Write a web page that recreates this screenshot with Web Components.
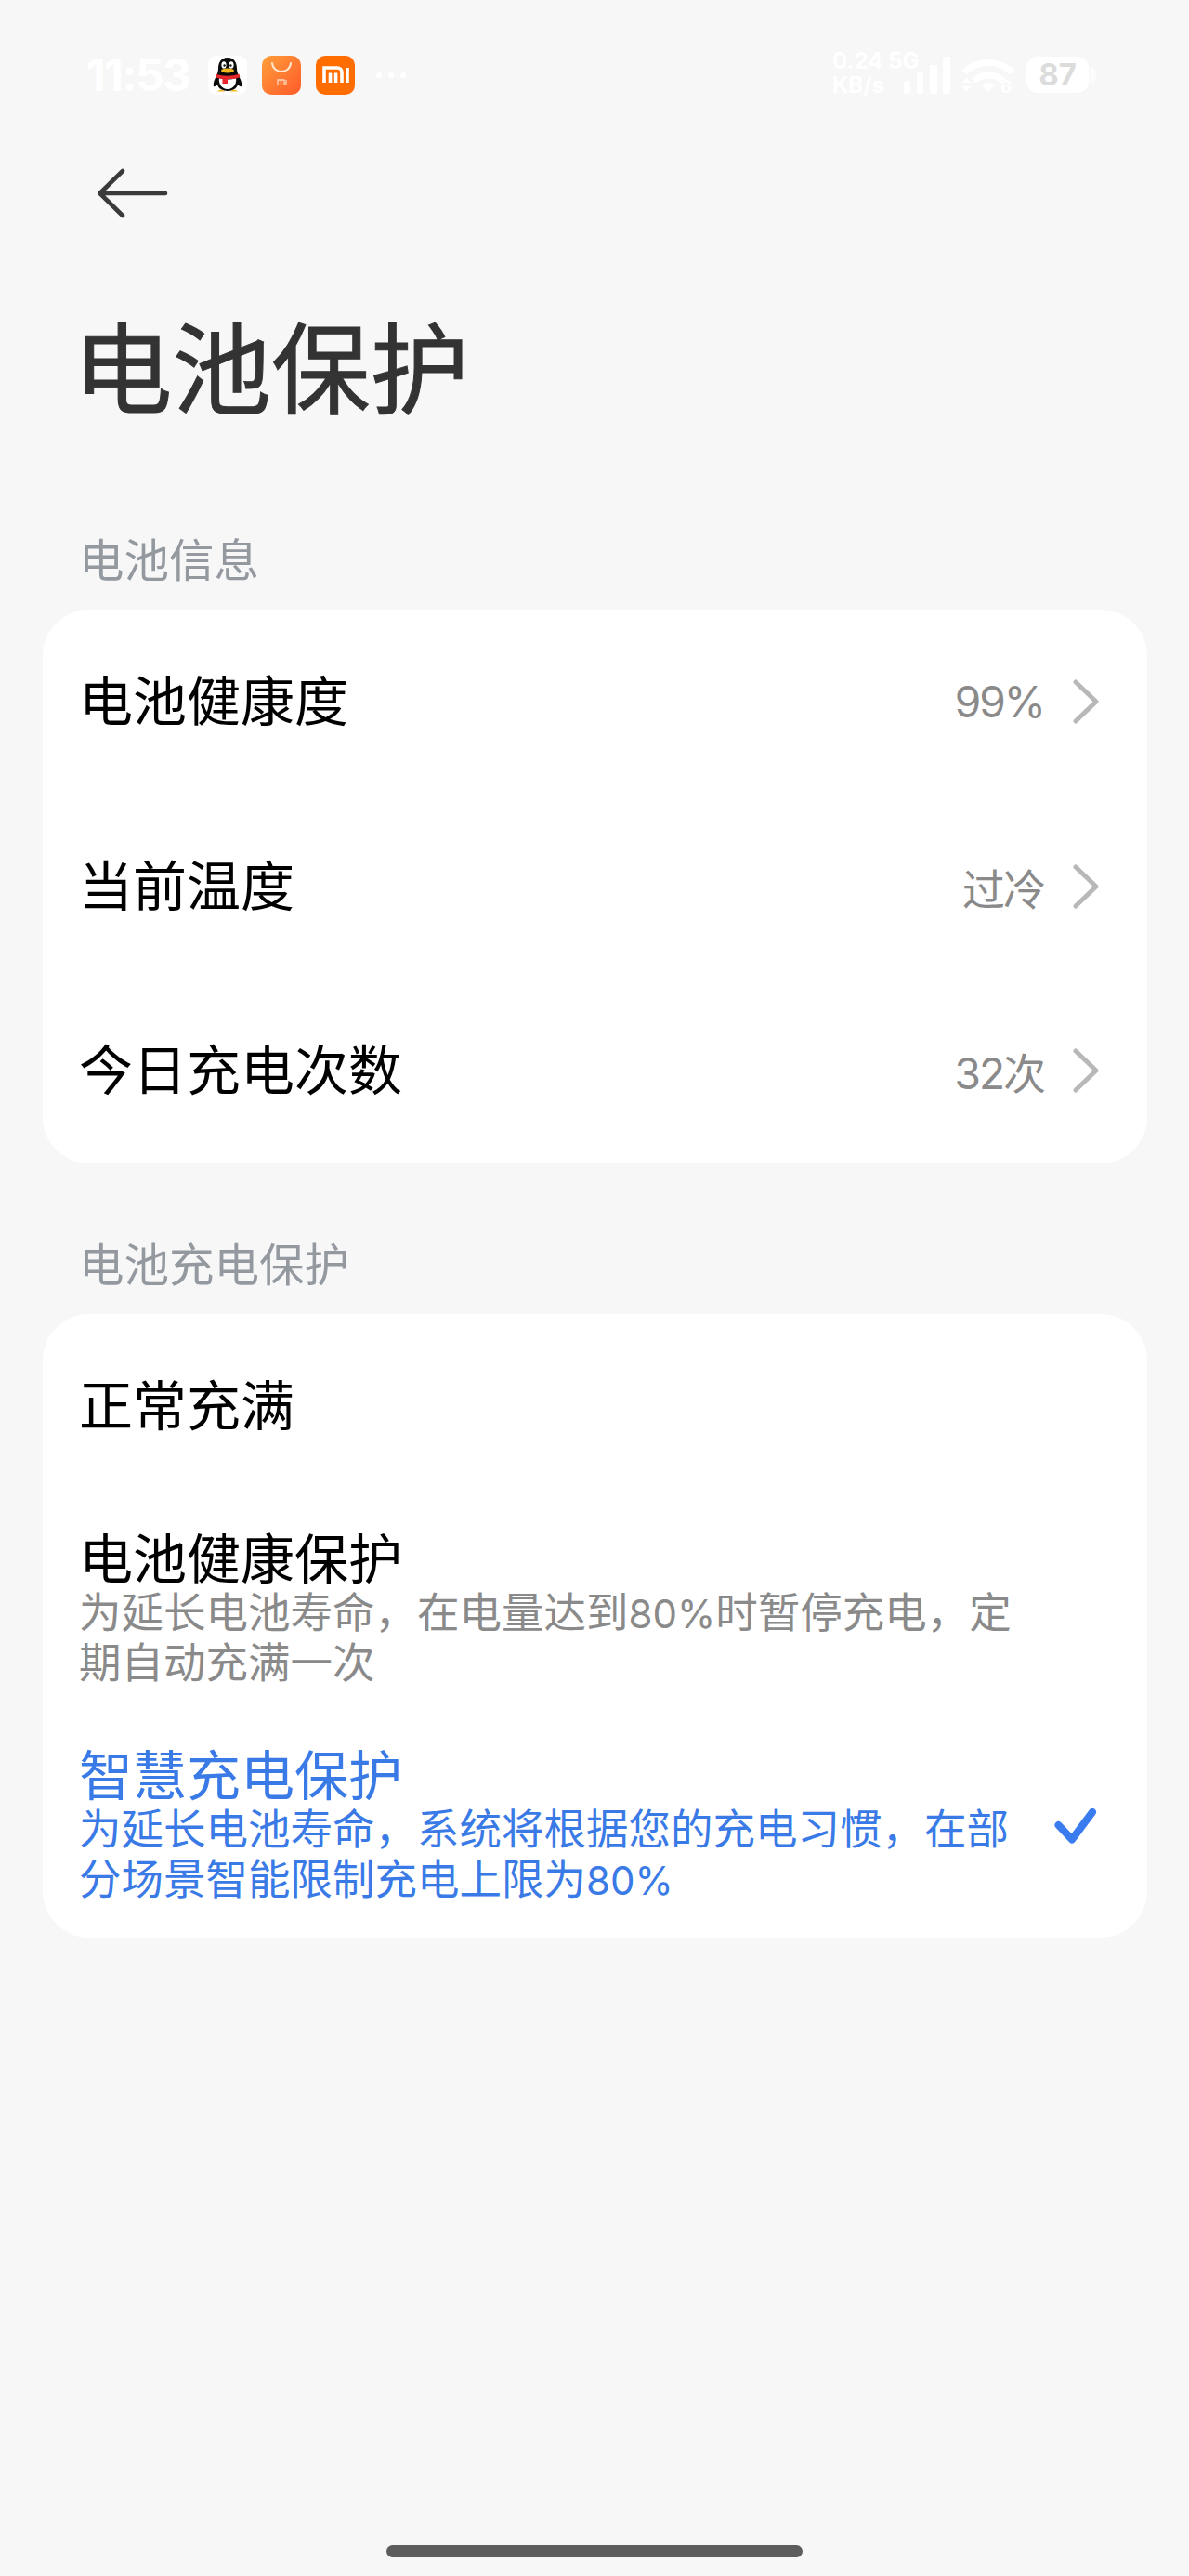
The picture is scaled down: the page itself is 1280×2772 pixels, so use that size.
<!DOCTYPE html>
<html lang="zh-CN">
<head>
<meta charset="utf-8">
<title>电池保护</title>
<style>
html, body { margin: 0; background: #f7f7f7; }
body { font-family: Inter, "Noto Sans CJK SC", sans-serif; }
.n { font-size: 42px; line-height: 1; }
</style>
</head>
<body>
<battery-page>
  <status-bar></status-bar>
  <page-header>电池保护</page-header>
  <section-label>电池信息</section-label>
  <settings-card>
    <info-row value="99%">电池健康度</info-row>
    <info-row value="过冷">当前温度</info-row>
    <info-row value="32次">今日充电次数</info-row>
  </settings-card>
  <section-label>电池充电保护</section-label>
  <settings-card>
    <choice-row class="plain">正常充满</choice-row>
    <choice-row class="tight">电池健康保护<span slot="sub">为延长电池寿命&#xFF0C;在电量达到<span class="n">80%</span>时暂停充电&#xFF0C;定<br>期自动充满一次</span></choice-row>
    <choice-row checked>智慧充电保护<span slot="sub">为延长电池寿命&#xFF0C;系统将根据您的充电习惯&#xFF0C;在部<br>分场景智能限制充电上限为<span class="n">80%</span></span></choice-row>
  </settings-card>
  <home-bar></home-bar>
</battery-page>

<script>
class BatteryPage extends HTMLElement {
  constructor() {
    super();
    this.attachShadow({mode: "open"}).innerHTML = `
    <style>
    :host { display: flex; flex-direction: column; height: 2772px; box-sizing: border-box; overflow: hidden; }
    </style>
    <slot></slot>`;
  }
}

class StatusBar extends HTMLElement {
  constructor() {
    super();
    this.attachShadow({mode: "open"}).innerHTML = `
    <style>
    :host { display: flex; align-items: center; height: 41px; margin-top: 60px; padding: 0 108px 0 93px; color: #fff; font-family: Inter, sans-serif; font-weight: 700; }
    .time { font-size: 48px; line-height: 41px; width: 131px; letter-spacing: -1.5px; }
    .apps { display: flex; gap: 16px; align-items: center; }
    svg { display: block; overflow: visible; }
    .dots { display: flex; gap: 7px; margin-left: 23px; }
    .dots i { width: 6px; height: 6px; border-radius: 50%; background: #fff; }
    .right { margin-left: auto; display: flex; align-items: center; }
    .net { display: grid; font-size: 24px; line-height: 26px; width: 77px; white-space: nowrap; margin-top: -3px; }
    .bat { position: relative; width: 67px; height: 39px; border-radius: 12px; background: #fff; margin-left: 13px; color: #dcdcdc; font-size: 33px; line-height: 39px; text-align: center; }
    .bat::after { content: ""; position: absolute; left: 68px; top: 12px; width: 7px; height: 16px; border-radius: 0 6px 6px 0; background: #fcfcfc; }
    </style>
    <div class="time">11:53</div>
    <div class="apps">
      <svg width="42" height="42" viewBox="0 0 42 42">
        <rect width="42" height="42" rx="9" fill="#fff"/>
        <path d="M21 2c-7 0-10 5-10 12 0 3-1 5-2 8-2 3-4 8-3 11 1 1 3-1 4-2 1 4 5 7 11 7s10-3 11-7c1 1 3 3 4 2 1-3-1-8-3-11-1-3-2-5-2-8 0-7-3-12-10-12z" fill="#0b0b0b"/>
        <path d="M12 24c-1 5 2 12 9 12s10-7 9-12c-5 2-13 2-18 0z" fill="#fff"/>
        <ellipse cx="17" cy="10" rx="2.6" ry="3.8" fill="#fff"/><ellipse cx="25" cy="10" rx="2.6" ry="3.8" fill="#fff"/>
        <circle cx="17.6" cy="10.5" r="1.2" fill="#111"/><circle cx="24.4" cy="10.5" r="1.2" fill="#111"/>
        <ellipse cx="21" cy="16" rx="7" ry="2.4" fill="#f5b81c"/>
        <path d="M8.500 19.500c7 3 18 3 25 0l.8 3.500c-2 1-4 1.600-7 2H21v5h-5.500v-5c-3-.4-5.500-1-7.500-2z" fill="#e8252a"/>
        <path d="M10 38.500c2-2.500 6-2 8 0zM24 38.500c2-2 6-2.500 8 0z" fill="#f5b81c"/>
      </svg>
      <svg width="42" height="42" viewBox="0 0 42 42">
        <defs><linearGradient id="g" x1="0" y1="0" x2="1" y2="1"><stop offset="0" stop-color="#ff9f3a"/><stop offset="1" stop-color="#ff5a2a"/></linearGradient></defs>
        <rect width="42" height="42" rx="10" fill="url(#g)"/>
        <path d="M11 8c1 12 19 12 20 0" fill="none" stroke="#ffe9d2" stroke-width="2" stroke-linecap="round"/>
        <path d="M17 31v-5h7v5M20.500 26.500V31M26 26v5" fill="none" stroke="#ffd9c0" stroke-width="1.300"/>
      </svg>
      <svg width="42" height="42" viewBox="0 0 42 42">
        <rect width="42" height="42" rx="10" fill="#ff6c00"/>
        <path d="M9 29V13h14c3 0 5 2 5 5v11M15.500 29V18.500M21.600 29V18.500M34 13v16" fill="none" stroke="#fff" stroke-width="3.600"/>
      </svg>
    </div>
    <div class="dots"><i></i><i></i><i></i></div>
    <div class="right">
      <div class="net"><span>0.24 5G</span><span>KB/s</span></div>
      <svg width="50" height="40" viewBox="0 0 50 40"><g fill="#fff"><rect x="0" y="26" width="7" height="14" rx="2"/><rect x="14" y="17" width="7" height="23" rx="2"/><rect x="28" y="9" width="8" height="31" rx="2"/><rect x="42" y="0" width="8" height="40" rx="2"/></g></svg>
      <svg width="56" height="40" viewBox="0 0 56 40" style="margin-left:13px"><g fill="none" stroke="#fff" stroke-width="7"><path d="M2 17C16 3 40 3 54 17"/><path d="M12 26c9-8 23-8 32 0"/></g><path d="M21 31c4-4 10-4 14 0l-7 7z" fill="#fff"/><path d="M4 22l5 6H0zM4 38l5-6H0z" fill="#fff"/><text x="41" y="39" font-size="19" font-family="Inter" font-weight="700" fill="#fff">6</text></svg>
      <div class="bat">87</div>
    </div>`;
  }
}

class PageHeader extends HTMLElement {
  constructor() {
    super();
    this.attachShadow({mode: "open"}).innerHTML = `
    <style>
    :host { display: block; padding: 80px 0 0 79px; }
    svg { display: block; margin-left: 26px; }
    h1 { margin: 105px 0 36px; font: 400 106.5px/118px Inter, "Noto Sans CJK SC", sans-serif; color: #333; -webkit-text-stroke: 1px #333; }
    </style>
    <svg width="76" height="54" viewBox="0 0 76 54"><path d="M2.500 27H73M27 3 2.500 27 27 51" fill="none" stroke="#3a3a3a" stroke-width="4.600" stroke-linecap="round" stroke-linejoin="round"/></svg>
    <h1><slot></slot></h1>`;
  }
}

class SectionLabel extends HTMLElement {
  constructor() {
    super();
    this.attachShadow({mode: "open"}).innerHTML = `
    <style>
    :host { display: block; padding: 0 85px; margin: 78px 0 20px; font-size: 48.5px; line-height: 64px; color: #93999f; }
    </style>
    <slot></slot>`;
  }
}

class SettingsCard extends HTMLElement {
  constructor() {
    super();
    this.attachShadow({mode: "open"}).innerHTML = `
    <style>
    :host { display: block; margin: 0 45px 0 46px; background: #fff; border-radius: 50px; }
    </style>
    <slot></slot>`;
  }
}

class InfoRow extends HTMLElement {
  constructor() {
    super();
    this.attachShadow({mode: "open"}).innerHTML = `
    <style>
    :host { display: flex; align-items: center; height: 198.5px; padding: 0 52px 0 39px; font-size: 58px; color: #000; }
    .title { flex: 1; margin-bottom: 8px; }
    .value { font-size: 46px; letter-spacing: -2px; color: #8a8a8a; }
    svg { display: block; margin-left: 31px; }
    </style>
    <div class="title"><slot></slot></div>
    <div class="value">${this.getAttribute("value")}</div>
    <svg width="28" height="48" viewBox="0 0 28 48"><path d="M3 3 25 24 3 45" fill="none" stroke="#b8b8b8" stroke-width="5" stroke-linecap="round" stroke-linejoin="round"/></svg>`;
  }
}

class ChoiceRow extends HTMLElement {
  constructor() {
    super();
    const checked = this.hasAttribute("checked");
    this.attachShadow({mode: "open"}).innerHTML = `
    <style>
    :host { display: flex; align-items: center; box-sizing: border-box; padding: 35px 54px 35px 39px; font-size: 58px; line-height: 62px; color: ${checked ? "#3a7ae6" : "#000"}; }
    :host(.plain) { height: 198px; }
    :host(.tight) { padding-bottom: 28px; }
    .text { flex: none; width: 1012px; }
    .sub { font-size: 45.5px; line-height: 54px; color: ${checked ? "#3a7ae6" : "#8a8a8a"}; }
    svg { display: block; margin-left: auto; }
    </style>
    <div class="text"><slot></slot><div class="sub"><slot name="sub"></slot></div></div>
    ${checked ? `<svg width="46" height="38" viewBox="0 0 46 38"><path d="M4.500 18 19 33.500 41 4" fill="none" stroke="#3a7cf0" stroke-width="8" stroke-linecap="round" stroke-linejoin="round"/></svg>` : ""}`;
  }
}

class HomeBar extends HTMLElement {
  constructor() {
    super();
    this.attachShadow({mode: "open"}).innerHTML = `
    <style>
    :host { display: block; width: 448px; height: 13px; border-radius: 7px; background: #5d5d5d; margin: auto auto 20px; }
    </style>`;
  }
}

customElements.define("battery-page", BatteryPage);
customElements.define("status-bar", StatusBar);
customElements.define("page-header", PageHeader);
customElements.define("section-label", SectionLabel);
customElements.define("settings-card", SettingsCard);
customElements.define("info-row", InfoRow);
customElements.define("choice-row", ChoiceRow);
customElements.define("home-bar", HomeBar);
</script>
</body>
</html>
